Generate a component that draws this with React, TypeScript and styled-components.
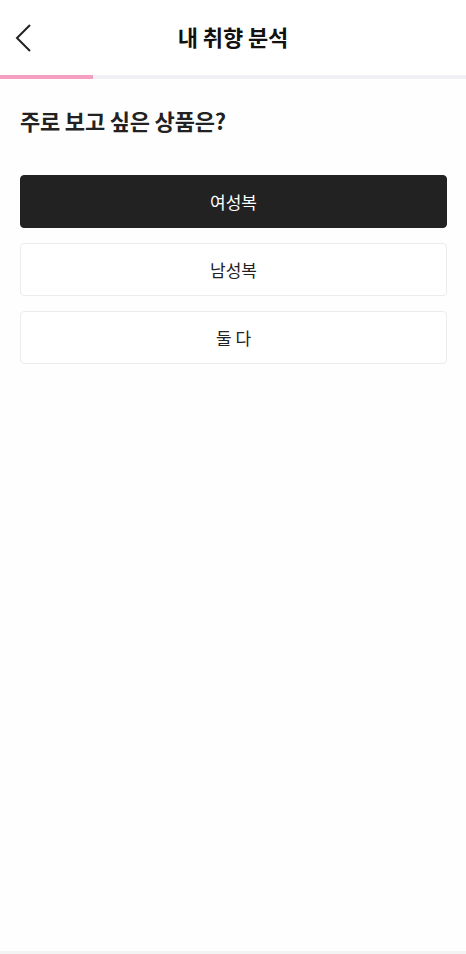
import styled, { createGlobalStyle } from "styled-components";

const GlobalStyle = createGlobalStyle`
    html, body {
        margin: 0;
        padding: 0;
        background: #fefefe;
    }
    body {
        font-family: "Noto Sans CJK KR", "Noto Sans", sans-serif;
        color: #1f1f1f;
    }
`;

const Page = styled.div`
    width: 466px;
    height: 954px;
    display: flex;
    flex-direction: column;
    background: #fefefe;
    box-sizing: border-box;
`;

const Header = styled.header`
    height: 75px;
    display: grid;
    grid-template-columns: 60px 1fr 60px;
    align-items: center;
    background: #ffffff;
`;

const BackButton = styled.button`
    border: 0;
    background: none;
    padding: 0 0 0 13px;
    height: 40px;
    display: flex;
    align-items: center;
    cursor: pointer;
`;

const Title = styled.h1`
    margin: 0;
    text-align: center;
    font-size: 22px;
    font-weight: 700;
    letter-spacing: -0.1px;
    color: #111;
    padding-bottom: 4px;
`;

const Progress = styled.div`
    height: 4px;
    background: #f1f1f5;
`;

const ProgressFill = styled.div`
    height: 100%;
    background: #f59fc1;
`;

const Body = styled.main`
    flex: 1;
    padding: 26px 19px 0 20px;
`;

const Question = styled.h2`
    margin: 0 0 40px;
    font-size: 22px;
    font-weight: 700;
    letter-spacing: -0.2px;
    color: #222;
    line-height: 30px;
`;

const Options = styled.div`
    display: flex;
    flex-direction: column;
    gap: 15px;
`;

const Option = styled.button<{ $selected?: boolean }>`
    height: 53px;
    border-radius: 4px;
    border: 1px solid ${(p) => (p.$selected ? "#222" : "#ececec")};
    background: ${(p) => (p.$selected ? "#222222" : "#ffffff")};
    color: ${(p) => (p.$selected ? "#ffffff" : "#222")};
    font-family: inherit;
    font-size: 17px;
    font-weight: 400;
    cursor: pointer;
`;

const Footer = styled.div`
    height: 3px;
    background: #f3f3f3;
`;

const options = ["여성복", "남성복", "둘 다"];

export default function App() {
    const selected = 0;
    return (
        <Page>
            <GlobalStyle />
            <Header>
                <BackButton aria-label="back">
                    <svg width="20" height="30" viewBox="0 0 20 30">
                        <path
                            d="M17 2 L4 15 L17 28"
                            fill="none"
                            stroke="#222"
                            strokeWidth="2"
                        />
                    </svg>
                </BackButton>
                <Title>내 취향 분석</Title>
                <span />
            </Header>
            <Progress>
                <ProgressFill style={{ width: `${(1 / 5) * 100}%` }} />
            </Progress>
            <Body>
                <Question>주로 보고 싶은 상품은?</Question>
                <Options>
                    {options.map((o, i) => (
                        <Option key={o} $selected={i === selected}>
                            {o}
                        </Option>
                    ))}
                </Options>
            </Body>
            <Footer />
        </Page>
    );
}
